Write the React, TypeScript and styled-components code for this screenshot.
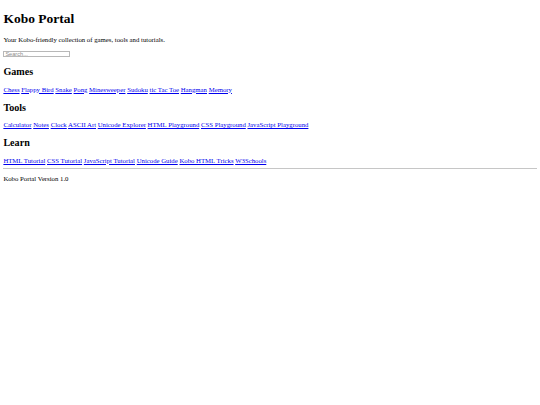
import React from "react";
import styled, { createGlobalStyle } from "styled-components";

const Global = createGlobalStyle`
  html, body { background: #fff; }
  body {
    margin: 3.375px;
    font-family: "Liberation Serif", "Times New Roman", serif;
    font-size: 6.75px;
    line-height: 1.107;
    color: #000;
  }
`;

const Title = styled.h1`
  font-size: 13.5px;
  font-weight: bold;
  margin: 9.05px 0;
`;

const Intro = styled.p`
  margin: 6.75px 0;
`;

const SearchBar = styled.div`
  padding: 0 0 0.4px;
`;

const Search = styled.input`
  display: block;
  box-sizing: border-box;
  width: 66.7px;
  height: 6.8px;
  margin: 0;
  padding: 0 1px;
  border: 1px solid #b8b8b8;
  font-family: "Liberation Sans", Arial, sans-serif;
  font-size: 5.625px;
  line-height: 4.8px;
  color: #000;
  background: #fff;
  outline: none;
  &::placeholder { color: #8c8c8c; }
`;

const SectionTitle = styled.h2`
  font-size: 10.125px;
  font-weight: bold;
  margin: 8.4px 0;
`;

const LinkRow = styled.nav`
  display: block;
`;

const Link = styled.a`
  color: #0000ee;
  text-decoration: underline;
`;

const Rule = styled.hr`
  height: 0;
  margin: 3.375px 0;
  border: none;
  border-top: 1px solid #c6c6c6;
`;

const Footer = styled.p`
  margin: 6.75px 0;
`;

const sections: { title: string; links: string[] }[] = [
  {
    title: "Games",
    links: ["Chess", "Flappy Bird", "Snake", "Pong", "Minesweeper", "Sudoku", "tic Tac Toe", "Hangman", "Memory"],
  },
  {
    title: "Tools",
    links: ["Calculator", "Notes", "Clock", "ASCII Art", "Unicode Explorer", "HTML Playground", "CSS Playground", "JavaScript Playground"],
  },
  {
    title: "Learn",
    links: ["HTML Tutorial", "CSS Tutorial", "JavaScript Tutorial", "Unicode Guide", "Kobo HTML Tricks", "W3Schools"],
  },
];

export default function App() {
  return (
    <>
      <Global />
      <Title>Kobo Portal</Title>
      <Intro>Your Kobo-friendly collection of games, tools and tutorials.</Intro>
      <SearchBar>
        <Search placeholder="Search..." />
      </SearchBar>
      {sections.map((s) => (
        <section key={s.title}>
          <SectionTitle>{s.title}</SectionTitle>
          <LinkRow>
            {s.links.map((l, i) => (
              <React.Fragment key={l}>
                <Link href="#">{l}</Link>
                {i < s.links.length - 1 ? " " : ""}
              </React.Fragment>
            ))}
          </LinkRow>
        </section>
      ))}
      <Rule />
      <Footer>Kobo Portal Version 1.0</Footer>
    </>
  );
}
